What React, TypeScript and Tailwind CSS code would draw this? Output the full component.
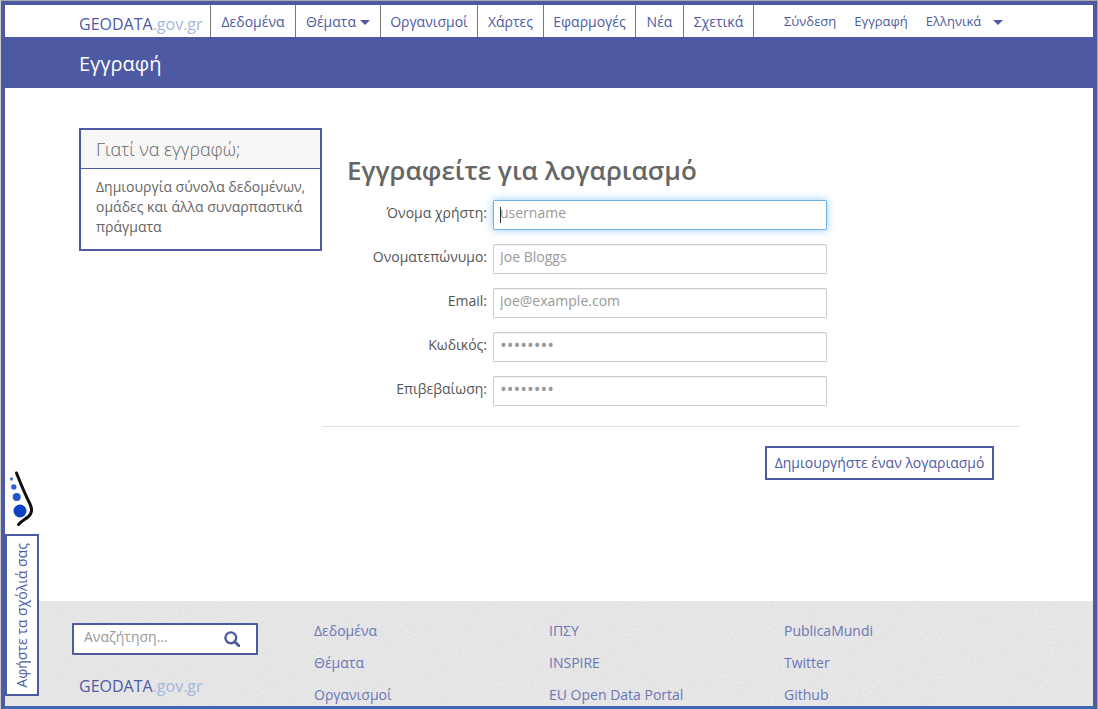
const navItems = [
  { label: 'Δεδομένα', width: 'w-[85px]' },
  { label: 'Θέματα', width: 'w-[85px]', menu: true },
  { label: 'Οργανισμοί', width: 'w-[97px]' },
  { label: 'Χάρτες', width: 'w-[66px]' },
  { label: 'Εφαρμογές', width: 'w-[92px]' },
  { label: 'Νέα', width: 'w-[48px]' },
  { label: 'Σχετικά', width: 'w-[70px]' },
]

const fields = [
  { id: 'username', label: 'Όνομα χρήστη:', type: 'text', placeholder: 'username', active: true },
  { id: 'fullname', label: 'Ονοματεπώνυμο:', type: 'text', placeholder: 'Joe Bloggs' },
  { id: 'email', label: 'Email:', type: 'email', placeholder: 'joe@example.com' },
  { id: 'password1', label: 'Κωδικός:', type: 'password', placeholder: '••••••••' },
  { id: 'password2', label: 'Επιβεβαίωση:', type: 'password', placeholder: '••••••••' },
]

const footerColumns = [
  ['Δεδομένα', 'Θέματα', 'Οργανισμοί'],
  ['ΙΠΣΥ', 'INSPIRE', 'EU Open Data Portal'],
  ['PublicaMundi', 'Twitter', 'Github'],
]

function Logo() {
  return (
    <a href="#" className="block text-base leading-6 whitespace-nowrap text-[#4d5aa3]">
      GEODATA<span className="text-[#a3b6dd]">.gov.gr</span>
    </a>
  )
}

function Caret() {
  return (
    <svg width="10" height="5" viewBox="0 0 10 5" aria-hidden="true" className="shrink-0 fill-[#4d5aa3]">
      <path d="M0 0h10L5 5z" />
    </svg>
  )
}

function Header() {
  return (
    <header>
      <div className="mx-auto flex h-8 max-w-[940px]">
        <div className="flex w-[131px] items-center pt-1.5">
          <Logo />
        </div>
        <nav className="flex border-l border-[#777]">
          {navItems.map((item) => (
            <a
              key={item.label}
              href="#"
              className={`flex items-center justify-center gap-1 border-r border-[#777] pt-0.5 text-sm ${item.width}`}
            >
              {item.label}
              {item.menu && <Caret />}
            </a>
          ))}
        </nav>
        <div className="flex items-center gap-[18px] pt-0.5 pl-[30px] text-[13px]">
          <a href="#">Σύνδεση</a>
          <a href="#">Εγγραφή</a>
          <button type="button" className="flex items-center gap-3">
            Ελληνικά
            <Caret />
          </button>
        </div>
      </div>
      <div className="bg-[#4d5aa3] text-white">
        <div className="mx-auto flex h-[51px] max-w-[940px] items-center pt-0.5 text-xl">Εγγραφή</div>
      </div>
    </header>
  )
}

function WhyRegister() {
  return (
    <aside className="w-[243px] shrink-0 border-2 border-[#4d5aa3] text-[#666]">
      <h2 className="border-b border-[#4d5aa3] bg-[#f6f6f6] px-[15px] py-1.5 text-lg leading-[26px] font-light">
        Γιατί να εγγραφώ;
      </h2>
      <p className="pt-2 pr-1 pb-3 pl-[15px] text-sm leading-5">
        Δημιουργία σύνολα δεδομένων, ομάδες και άλλα συναρπαστικά πράγματα
      </p>
    </aside>
  )
}

function RegisterForm() {
  return (
    <form className="min-w-0 flex-1">
      <h1 className="pt-[22px] pl-[25px] text-[26px] leading-10 font-semibold text-[#666]">
        Εγγραφείτε για λογαριασμό
      </h1>
      <div className="flex flex-col gap-3.5 pt-2.5">
        {fields.map((field) => (
          <div key={field.id} className="flex">
            <label
              htmlFor={field.id}
              className="mr-1.5 w-[165px] shrink-0 pt-[3px] text-right text-sm leading-5 font-medium text-[#555]"
            >
              {field.label}
            </label>
            <div className="relative w-[334px]">
              <input
                id={field.id}
                type={field.type}
                placeholder={field.placeholder}
                className={`block h-[30px] w-full rounded-[1px] border bg-white px-1.5 text-[#555] outline-none placeholder:text-[#999] ${
                  field.type === 'password' ? 'pb-1 text-lg' : 'pb-1.5 text-sm'
                } ${
                  field.active
                    ? 'border-[#6db4ee] shadow-[0_0_8px_rgba(82,168,236,0.6)]'
                    : 'border-[#ccc] shadow-[inset_0_1px_1px_rgba(0,0,0,0.075)]'
                }`}
              />
              {field.active && <span className="absolute top-[7px] left-[7px] h-4 w-px bg-[#333]" />}
            </div>
          </div>
        ))}
      </div>
      <div className="mt-5 flex justify-end border-t border-[#e0e0e0] pt-[19px] pr-[25px]">
        <button type="submit" className="h-[34px] w-[229px] border-2 border-[#4d5aa3] bg-white text-sm whitespace-nowrap">
          Δημιουργήστε έναν λογαριασμό
        </button>
      </div>
    </form>
  )
}

function Footer() {
  return (
    <footer className="relative bg-[#e3e3e3] text-[#6b76b8]">
      {/* paper grain */}
      <svg className="absolute inset-0 size-full opacity-30" aria-hidden="true">
        <filter id="grain">
          <feTurbulence type="fractalNoise" baseFrequency="0.6" numOctaves="2" stitchTiles="stitch" />
          <feColorMatrix values="0 0 0 0 1  0 0 0 0 1  0 0 0 0 1  3 0 0 0 -1.3" />
        </filter>
        <rect width="100%" height="100%" filter="url(#grain)" />
      </svg>
      <div className="relative mx-auto grid max-w-[940px] grid-cols-4 pt-[22px]">
        <div>
          <div className="-ml-[7px] flex h-8 w-[186px] items-center rounded-[1px] border-2 border-[#4d5aa3] bg-white">
            <input
              type="search"
              aria-label="Αναζήτηση"
              placeholder="Αναζήτηση..."
              className="w-[150px] pb-1 pl-2.5 text-sm outline-none placeholder:text-[#999]"
            />
            <button type="submit" aria-label="Υποβολή">
              <svg width="16" height="16" viewBox="0 0 16 16" fill="none" stroke="#4d5aa3" aria-hidden="true">
                <circle cx="6.8" cy="6.8" r="5.4" strokeWidth="2.4" />
                <path d="M10.8 10.8l4 4" strokeWidth="2.8" strokeLinecap="round" />
              </svg>
            </button>
          </div>
          <div className="pt-[19px]">
            <Logo />
          </div>
        </div>
        {footerColumns.map((links) => (
          <ul key={links[0]} className="flex flex-col">
            {links.map((link) => (
              <li key={link} className="h-8 last:h-[19px]">
                <a href="#" className="block text-sm leading-4">
                  {link}
                </a>
              </li>
            ))}
          </ul>
        ))}
      </div>
    </footer>
  )
}

function FeedbackTab() {
  return (
    <div className="fixed bottom-[13px] left-[5px] flex flex-col items-start">
      <svg width="30" height="58" viewBox="0 0 30 58" aria-hidden="true" className="mb-1.5">
        <path
          d="M11.500 3C15 12 20 24 25 34c2.600 5.500 1.800 9.500-1.500 12.500-3.500 3-7 4.500-10 8"
          fill="none"
          stroke="#111"
          strokeWidth="3"
          strokeLinecap="round"
        />
        <circle cx="6.500" cy="9" r="1.700" fill="#3f78cf" />
        <circle cx="8.800" cy="17" r="2.700" fill="#2e62d0" />
        <circle cx="11.700" cy="27" r="4" fill="#2355cb" />
        <circle cx="15" cy="41" r="6.500" fill="#0b41c4" />
      </svg>
      <button
        type="button"
        className="flex h-[162px] w-[34px] items-center justify-center border-2 border-[#4d5aa3] bg-white text-sm"
      >
        <span className="rotate-180 whitespace-nowrap [writing-mode:vertical-rl]">Αφήστε τα σχόλιά σας</span>
      </button>
    </div>
  )
}

export default function App() {
  return (
    <div className="border-t border-r border-l border-[#a9a9a9] border-l-[#ccc] font-['Open_Sans','Noto_Sans',sans-serif] text-[#4d5aa3]">
      <div className="flex min-h-[calc(100vh-1px)] flex-col border-x-4 border-t-4 border-b-[3px] border-[#4d5aa3] border-b-[#3b67b5] bg-white">
        <Header />
        <main className="mx-auto flex w-full max-w-[940px] flex-1 items-start pt-10">
          <WhyRegister />
          <RegisterForm />
        </main>
        <Footer />
      </div>
      <FeedbackTab />
    </div>
  )
}
